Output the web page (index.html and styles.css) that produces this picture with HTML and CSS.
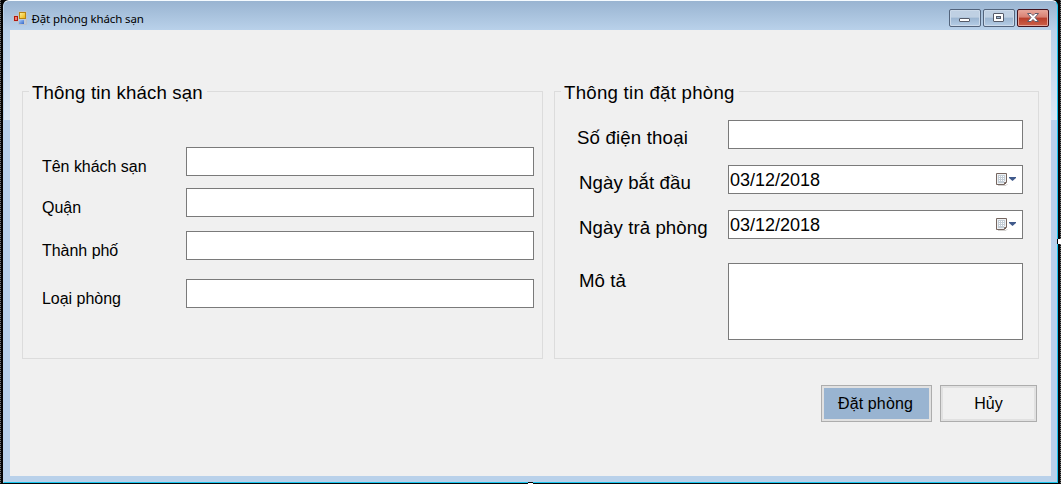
FILE: index.html
```html
<!DOCTYPE html>
<html lang="vi">
<head>
<meta charset="utf-8">
<title>Đặt phòng khách sạn</title>
<link rel="stylesheet" href="styles.css">
</head>
<body>
<div class="desktop">
  <div class="window">
    <header class="titlebar">
      <svg class="app-icon" width="14" height="14" viewBox="0 0 14 14">
        <defs>
          <linearGradient id="gold" x1="0" y1="0" x2="1" y2="1"><stop offset="0" stop-color="#fff2a0"/><stop offset="1" stop-color="#edb000"/></linearGradient>
          <linearGradient id="blue" x1="0" y1="0" x2="1" y2="1"><stop offset="0" stop-color="#a9cdfb"/><stop offset="1" stop-color="#3467c8"/></linearGradient>
        </defs>
        <path d="M.5 4.500H5.500V.5H13.500V13.500H5.500V10.500H.5Z" fill="#c3cad2" stroke="#bcc2ca"/>
        <rect x="1.500" y="5.500" width="3" height="4" fill="#f08070" stroke="#b01810"/>
        <rect x="6.500" y="1.500" width="6" height="6" fill="url(#gold)" stroke="#b78310"/>
        <rect x="6" y="9" width="5" height="4" fill="url(#blue)"/>
      </svg>
      <h1 class="title">Đặt phòng khách sạn</h1>
      <div class="controls">
        <button class="control" aria-label="Minimize"><svg width="30" height="16" viewBox="0 0 30 16"><rect x="9.500" y="8.500" width="10" height="3" rx=".5" fill="#fff" stroke="#555b69"/></svg></button>
        <button class="control" aria-label="Maximize"><svg width="30" height="16" viewBox="0 0 30 16"><rect x="9.500" y="3.500" width="10" height="8" rx=".5" fill="#fff" stroke="#555b69"/><rect x="12.500" y="6.500" width="4" height="2" fill="#9eb8d2" stroke="#555b69"/></svg></button>
        <button class="control close" aria-label="Close"><svg width="30" height="16" viewBox="0 0 30 16"><path d="M9.500 3.500H13L15 5.500L17 3.500H20.500L17 7.500L20.500 11.500H17L15 9.500L13 11.500H9.500L13 7.500Z" fill="#fff" stroke="#625c6b"/></svg></button>
      </div>
    </header>
    <main class="client">
      <div class="groups">
        <section class="group hotel">
          <h2 class="legend"><span>Thông tin khách sạn</span></h2>
          <label class="field"><span>Tên khách sạn</span><input class="box"></label>
          <label class="field"><span>Quận</span><input class="box"></label>
          <label class="field"><span>Thành phố</span><input class="box"></label>
          <label class="field"><span>Loại phòng</span><input class="box"></label>
        </section>
        <section class="group booking">
          <h2 class="legend wide"><span>Thông tin đặt phòng</span></h2>
          <label class="field phone"><span>Số điện thoại</span><input class="box"></label>
          <div class="field"><span>Ngày bắt đầu</span>
            <div class="box date"><span class="value">03/12/2018</span><svg class="picker" width="22" height="14" viewBox="0 0 22 14"><path d="M2 12.500H10L11.500 11" stroke="#d2d0ce" fill="none"/><path d="M.5.500H10.500V9.500L8.500 11.500H.5Z" fill="#eef1f3" stroke="#75655f"/><path d="M2 2H9V8H8V10H2Z" fill="#c3cdd6"/><path d="M3 3.500h6M3 5.500h6M3 7.500h6" stroke="#fff" stroke-dasharray="1 1"/><path d="M8.500 11V9.500H10" fill="none" stroke="#75655f"/><path d="M13 4H20V5L16.500 8L13 5Z" fill="#405a8b"/></svg></div></div>
          <div class="field"><span>Ngày trả phòng</span>
            <div class="box date"><span class="value">03/12/2018</span><svg class="picker" width="22" height="14" viewBox="0 0 22 14"><path d="M2 12.500H10L11.500 11" stroke="#d2d0ce" fill="none"/><path d="M.5.500H10.500V9.500L8.500 11.500H.5Z" fill="#eef1f3" stroke="#75655f"/><path d="M2 2H9V8H8V10H2Z" fill="#c3cdd6"/><path d="M3 3.500h6M3 5.500h6M3 7.500h6" stroke="#fff" stroke-dasharray="1 1"/><path d="M8.500 11V9.500H10" fill="none" stroke="#75655f"/><path d="M13 4H20V5L16.500 8L13 5Z" fill="#405a8b"/></svg></div></div>
          <label class="field note"><span>Mô tả</span><textarea class="box"></textarea></label>
        </section>
      </div>
      <div class="actions">
        <button class="btn primary">Đặt phòng</button>
        <button class="btn">Hủy</button>
      </div>
    </main>
  </div>
  <i class="handle right"></i>
  <i class="handle bottom"></i>
</div>
</body>
</html>
```
FILE: styles.css
```css
* { box-sizing: border-box; }
body { margin: 0; font-family: "Liberation Sans", Arial, sans-serif; color: #000; }
.desktop {
  position: relative; width: 1061px; height: 484px; overflow: hidden;
  padding: 0 3px 1px;
  background:
    repeating-linear-gradient(#777 0 1px, #111 1px 2px) 0 0 / 1px 100% no-repeat,
    repeating-linear-gradient(#777 0 1px, #111 1px 2px) 100% 0 / 1px 100% no-repeat,
    #050505;
}
.window {
  width: 1055px; height: 483px;
  border: 1px solid #19c5ee; border-top-color: #f5fbff; border-left-color: #b9d1ea;
  border-radius: 6px 6px 0 0;
  padding: 0 6px 6px;
  background:
    linear-gradient(#99b4d1, #b9d1ea) 0 0 / 100% 29px no-repeat,
    linear-gradient(#b9d1ea, #dce8f5) 0 29px / 100% 90px no-repeat,
    #b9d1ea;
}
.titlebar { display: flex; height: 29px; padding: 0 2px 0 3px; }
.app-icon { margin-top: 10px; }
.title { margin: 9px 0 0 4.500px; font: 400 11.500px/18px "Noto Sans", sans-serif; letter-spacing: -.13px; white-space: nowrap; }
.controls { display: flex; gap: 2px; margin: 8px 0 0 auto; }
.control {
  width: 32px; height: 18px; padding: 0; border: 1px solid #53647c; border-radius: 2px;
  background: linear-gradient(#bfd0e3 0 45%, #9bb5d1 50%, #b5cde6);
  box-shadow: inset 0 0 0 1px #ccdaea;
}
.control svg { display: block; }
.control.close { border-color: #43131e; background: linear-gradient(#e9a79b, #d88072 45%, #b83e2b 50%, #cc604a); box-shadow: inset 0 0 0 1px #e4a398; }
.client { height: 446px; padding: 50px 12px 0; background: #f0f0f0; }
.groups { display: grid; grid-template-columns: 521px 485px; gap: 11px; }
.group { height: 279px; padding: 0; background: linear-gradient(#dcdcdc, #dcdcdc) 0 11px / 100% 1px no-repeat, linear-gradient(#dcdcdc, #dcdcdc) 0 100% / 100% 1px no-repeat, linear-gradient(#dcdcdc, #dcdcdc) 0 11px / 1px 100% no-repeat, linear-gradient(#dcdcdc, #dcdcdc) 100% 11px / 1px 100% no-repeat; }
.legend { width: max-content; height: 24px; margin: 0 0 0 7px; padding: 0 4px 0 3px; background: #f0f0f0; font-size: 18.670px; font-weight: 400; line-height: 25px; letter-spacing: .15px; white-space: nowrap; }
.legend.wide { letter-spacing: .25px; }
.field { display: grid; }
.field > span { white-space: nowrap; }
.hotel .field { grid-template-columns: 144px 348px; height: 29px; margin-left: 20px; font-size: 16px; line-height: 39px; letter-spacing: -.03px; }
.hotel .field:nth-of-type(1) { margin-top: 43px; }
.hotel .field:nth-of-type(2) { margin-top: 12px; }
.hotel .field:nth-of-type(3) { margin-top: 14px; }
.hotel .field:nth-of-type(4) { margin-top: 19px; }
.booking .field { grid-template-columns: 149px 295px; height: 29px; margin: 16px 0 0 25px; font-size: 18.670px; line-height: 36px; letter-spacing: .08px; }
.booking .phone { grid-template-columns: 151px 295px; margin-left: 23px; letter-spacing: .16px; }
.booking .note { height: 77px; margin-top: 24px; }
.box { width: 100%; height: 29px; margin: 0; padding: 0; border: 1px solid #7a7a7a; border-radius: 0; background: #fff; outline: 0; resize: none; }
.note .box { height: 77px; }
.date { display: flex; justify-content: space-between; padding-left: 1px; line-height: 28px; }
.value { font-size: 18px; letter-spacing: 0; }
.picker { margin: 7px 4px 0 0; }
.actions { display: flex; justify-content: flex-end; gap: 8px; margin: 26px 2px 0 0; }
.btn { width: 97px; height: 37px; padding: 0; border: 1px solid #adadad; background: #f0f0f0; box-shadow: inset 0 0 0 2px #e1e1e1; font: 16px/35px "Liberation Sans", Arial, sans-serif; color: #000; }
.btn.primary { width: 111px; padding-right: 2px; background: #99b4d1; letter-spacing: .12px; }
.handle { position: absolute; background: #fff; border: 0 solid #000; }
.handle.right { right: 0; top: 239px; width: 4px; height: 5px; border-left-width: 1px; }
.handle.bottom { left: 528px; bottom: 0; width: 5px; height: 2px; border-top-width: 1px; }
```
